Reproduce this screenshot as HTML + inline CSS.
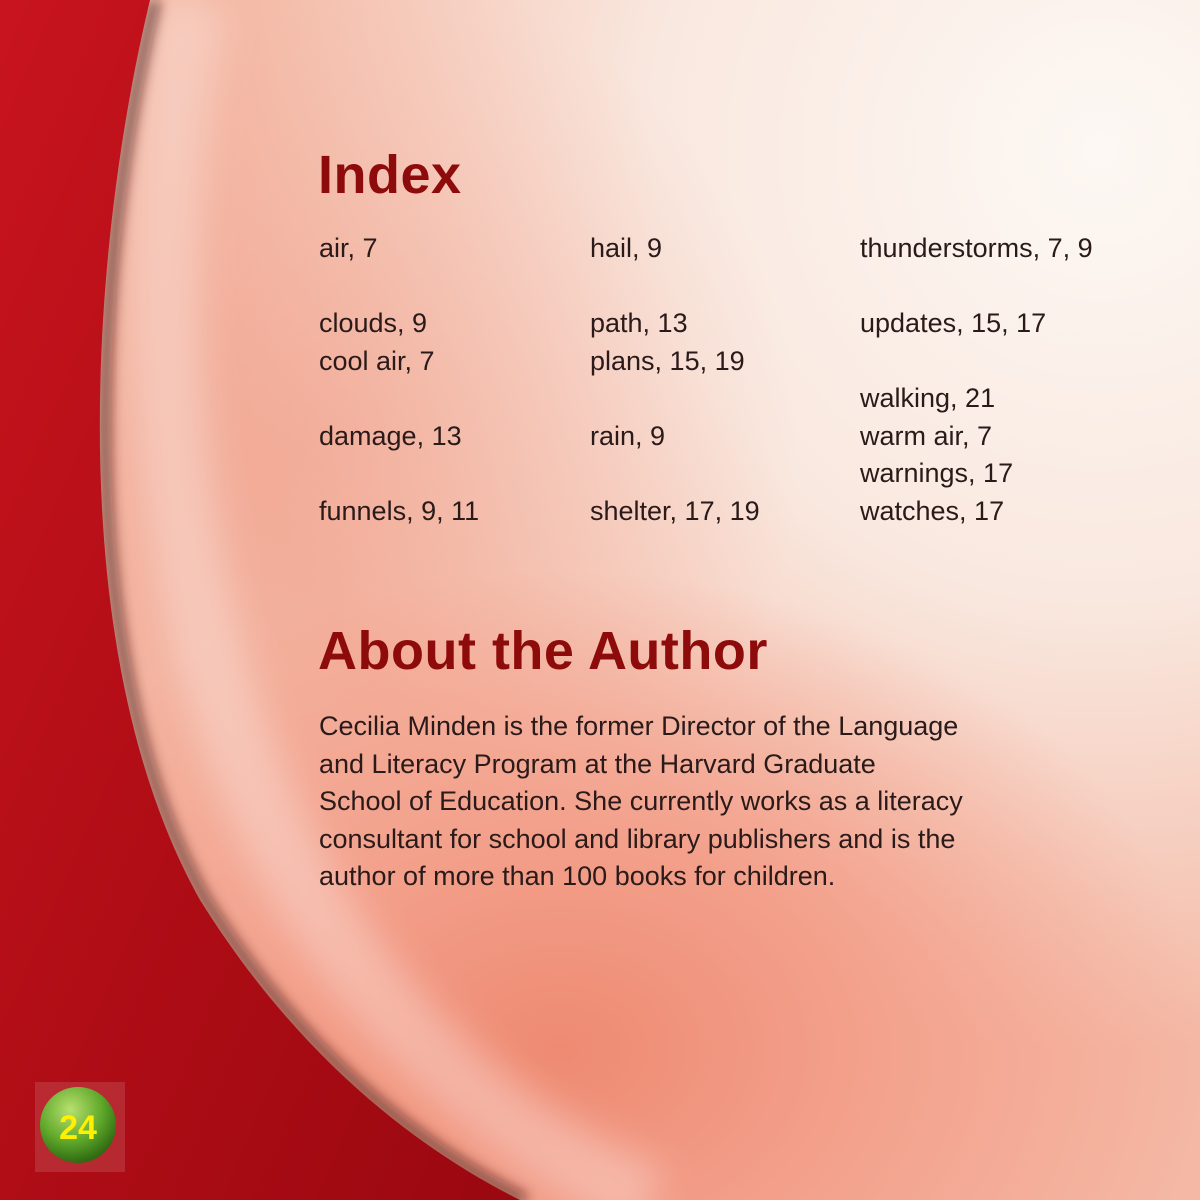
<!DOCTYPE html>
<html><head><meta charset="utf-8"><style>
html,body{margin:0;padding:0}
body{width:1200px;height:1200px;position:relative;overflow:hidden;font-family:"Liberation Sans",sans-serif;
background:radial-gradient(ellipse 650px 480px at 560px 1050px,#ee8a72 0%,#f3a08b 45%,rgba(248,210,195,0) 100%),
radial-gradient(ellipse 500px 500px at 300px 450px,rgba(240,160,140,0.55) 0%,rgba(240,160,140,0) 100%),
radial-gradient(ellipse 900px 900px at 1100px 150px,#fdf8f4 0%,#f9e8df 50%,#f4b8a4 100%);}
svg{position:absolute;left:0;top:0}
.t{position:absolute;color:#2a1a1a;font-size:27px;line-height:37.5px;white-space:nowrap}
h1{position:absolute;margin:0;color:#8e0b0b;font-weight:bold;font-size:54px;left:318px;letter-spacing:0.5px}
</style></head><body>
<svg width="1200" height="1200">
<defs>
<linearGradient id="r" x1="0" y1="0" x2="1" y2="1"><stop offset="0" stop-color="#c8141e"/><stop offset="0.5" stop-color="#b00d16"/><stop offset="1" stop-color="#9a0810"/></linearGradient>
<filter id="b"><feGaussianBlur stdDeviation="6"/></filter>
<filter id="b2"><feGaussianBlur stdDeviation="18"/></filter>
</defs>
<path d="M190 0 C 140 300, 160 650, 310 900 C 410 1060, 530 1150, 650 1200" fill="none" stroke="#fff" stroke-opacity="0.3" stroke-width="70" filter="url(#b2)"/>
<path d="M155 0 C 95 250, 65 650, 205 900 C 305 1060, 425 1150, 525 1200" fill="none" stroke="#3a1010" stroke-opacity="0.6" stroke-width="12" filter="url(#b)"/>
<path d="M150 0 C 90 250, 60 650, 200 900 C 300 1060, 420 1150, 520 1200 L0 1200 L0 0 Z" fill="url(#r)"/>
<rect x="35" y="1082" width="90" height="90" fill="#fff" fill-opacity="0.12"/>
<radialGradient id="g" cx="0.4" cy="0.3" r="0.7"><stop offset="0" stop-color="#b8e070"/><stop offset="0.6" stop-color="#5fa82a"/><stop offset="1" stop-color="#2f6a12"/></radialGradient>
<circle cx="78" cy="1125" r="38" fill="url(#g)"/>
<text x="78" y="1139" text-anchor="middle" font-family="Liberation Sans" font-weight="bold" font-size="34" fill="#ffef00">24</text>
</svg>
<h1 style="top:144px">Index</h1>
<div class="t" style="left:319px;top:230px">air, 7<br><br>clouds, 9<br>cool air, 7<br><br>damage, 13<br><br>funnels, 9, 11</div>
<div class="t" style="left:590px;top:230px">hail, 9<br><br>path, 13<br>plans, 15, 19<br><br>rain, 9<br><br>shelter, 17, 19</div>
<div class="t" style="left:860px;top:230px">thunderstorms, 7, 9<br><br>updates, 15, 17<br><br>walking, 21<br>warm air, 7<br>warnings, 17<br>watches, 17</div>
<h1 style="top:620px">About the Author</h1>
<div class="t" style="left:319px;top:708px">Cecilia Minden is the former Director of the Language<br>and Literacy Program at the Harvard Graduate<br>School of Education. She currently works as a literacy<br>consultant for school and library publishers and is the<br>author of more than 100 books for children.</div>
</body></html>
